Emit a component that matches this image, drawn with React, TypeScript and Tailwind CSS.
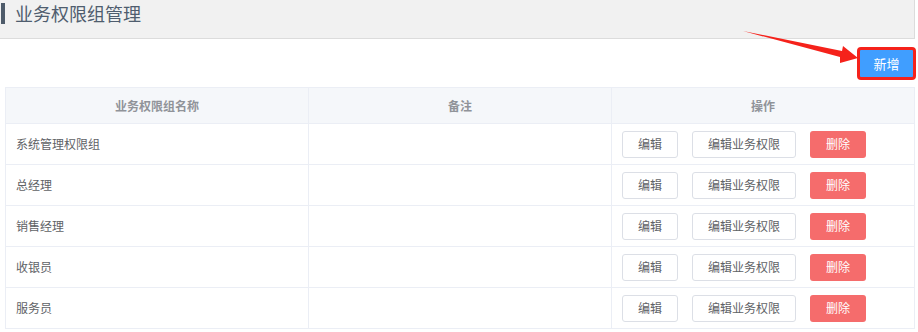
import React from "react";

const groups = ["系统管理权限组", "总经理", "销售经理", "收银员", "服务员"];

const font = { fontFamily: '"Noto Sans CJK SC", "Noto Sans", sans-serif' };

const App: React.FC = () => {
  return (
    <div className="relative w-[918px] h-[332px] bg-white" style={font}>
      <div className="w-[915px]">
        {/* page title bar */}
        <div className="h-[39px] bg-[#f1f1f1] border-b border-r border-[#dcdcdc] flex items-start pt-[3px]">
          <div className="ml-[1px] w-[4px] h-[21px] bg-[#4e5b6a]" />
          <h1 className="ml-[10px] text-[18px] leading-[21px] text-[#4f5d6e]">
            业务权限组管理
          </h1>
        </div>

        <div className="pl-[5px] pr-[1px]">
          <div className="flex justify-end mt-[8px]">
            <button className="h-[33px] w-[59px] rounded-[4px] border-[3px] border-[#f5221b] bg-[#409eff] text-white text-[13px] mr-[-2px]">
              新增
            </button>
          </div>

          <table className="mt-[7px] w-[909px] table-fixed border-collapse text-[12px]">
            <thead>
              <tr className="h-[36px] bg-[#f5f7fa] text-[#909399] font-bold">
                <th className="w-[303px] border border-[#ebeef5] font-bold">业务权限组名称</th>
                <th className="w-[303px] border border-[#ebeef5] font-bold">备注</th>
                <th className="w-[303px] border border-[#ebeef5] font-bold">操作</th>
              </tr>
            </thead>
            <tbody>
              {groups.map((name) => (
                <tr key={name} className="h-[41px] text-[#606266]">
                  <td className="border border-[#ebeef5] px-[10px]">{name}</td>
                  <td className="border border-[#ebeef5] px-[10px]"></td>
                  <td className="border border-[#ebeef5] px-[10px]">
                    <div className="flex gap-[14px]">
                      <button className="h-[27px] w-[56px] rounded-[3px] border border-[#dcdfe6] bg-white text-[#606266] text-[12px]">
                        编辑
                      </button>
                      <button className="h-[27px] w-[104px] rounded-[3px] border border-[#dcdfe6] bg-white text-[#606266] text-[12px]">
                        编辑业务权限
                      </button>
                      <button className="h-[27px] w-[56px] rounded-[3px] bg-[#f56c6c] text-white text-[12px]">
                        删除
                      </button>
                    </div>
                  </td>
                </tr>
              ))}
            </tbody>
          </table>
        </div>
      </div>

      {/* annotation arrow */}
      <svg
        className="absolute left-0 top-0 pointer-events-none"
        width="918"
        height="332"
        viewBox="0 0 918 332"
      >
        <polygon
          points="743,31 842,51 843,46 858,58 840,63 840,57"
          fill="#f5221b"
        />
      </svg>
    </div>
  );
};

export default App;
